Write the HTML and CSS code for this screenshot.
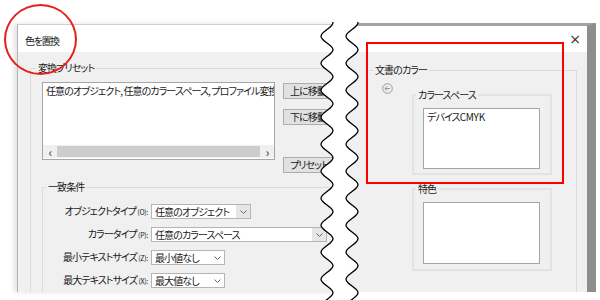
FILE: index.html
```html
<!DOCTYPE html>
<html lang="ja">
<head>
    <meta charset="UTF-8">
    <meta name="viewport" content="width=device-width, initial-scale=1.0">
    <title>色を置換</title>
    <link rel="stylesheet" href="styles.css">
</head>
<body>
    <div class="stage">
        <!-- 左側: 色を置換ダイアログ -->
        <div class="dlg dlg-left">
            <div class="titlebar">色を置換</div>
            <div class="dlg-body">
                <div class="grp grp-preset">
                    <div class="grp-title">変換プリセット</div>
                    <div class="preset-row">
                        <div class="listbox preset-list">
                            <div class="list-text">任意のオブジェクト, 任意のカラースペース, プロファイル変換</div>
                            <div class="hscroll">
                                <span class="sc-arrow">&lsaquo;</span>
                                <span class="sc-thumb"></span>
                                <span class="sc-arrow">&rsaquo;</span>
                            </div>
                        </div>
                        <div class="btn-col">
                            <button class="btn btn-up">上に移動</button>
                            <button class="btn btn-down">下に移動</button>
                            <button class="btn btn-save">プリセットを保存</button>
                        </div>
                    </div>

                    <div class="grp grp-match">
                        <div class="grp-title">一致条件</div>
                        <div class="cond-grid">
                            <label>オブジェクトタイプ <small>(O):</small></label>
                            <div class="combo combo-obj">
                                <span class="combo-text">任意のオブジェクト</span>
                                <span class="combo-btn"><svg width="7" height="4" viewBox="0 0 7 4"><polyline points="0.5,0.5 3.5,3.5 6.5,0.5" fill="none" stroke="#666" stroke-width="1"/></svg></span>
                            </div>

                            <label>カラータイプ <small>(P):</small></label>
                            <div class="combo combo-color">
                                <span class="combo-text">任意のカラースペース</span>
                                <span class="combo-btn"><svg width="7" height="4" viewBox="0 0 7 4"><polyline points="0.5,0.5 3.5,3.5 6.5,0.5" fill="none" stroke="#666" stroke-width="1"/></svg></span>
                            </div>

                            <label>最小テキストサイズ <small>(Z):</small></label>
                            <div class="combo combo-size">
                                <span class="combo-text">最小値なし</span>
                                <span class="combo-arrow"><svg width="7" height="4" viewBox="0 0 7 4"><polyline points="0.5,0.5 3.5,3.5 6.5,0.5" fill="none" stroke="#666" stroke-width="1"/></svg></span>
                            </div>

                            <label>最大テキストサイズ <small>(X):</small></label>
                            <div class="combo combo-size">
                                <span class="combo-text">最大値なし</span>
                                <span class="combo-arrow"><svg width="7" height="4" viewBox="0 0 7 4"><polyline points="0.5,0.5 3.5,3.5 6.5,0.5" fill="none" stroke="#666" stroke-width="1"/></svg></span>
                            </div>
                        </div>
                    </div>
                </div>
            </div>
        </div>

        <!-- 右側: 文書のカラー -->
        <div class="dlg dlg-right">
            <div class="titlebar titlebar-right"><span class="close">&times;</span></div>
            <div class="dlg-body">
                <div class="grp grp-doc">
                    <div class="grp-title">文書のカラー</div>
                    <div class="doc-row">
                        <svg class="back-icon" width="11" height="11" viewBox="0 0 11 11">
                            <circle cx="5.5" cy="5.5" r="4.8" fill="none" stroke="#9a9a9a" stroke-width="1"/>
                            <polyline points="5.2,3.2 3,5.5 5.2,7.8" fill="none" stroke="#9a9a9a" stroke-width="1"/>
                            <line x1="3" y1="5.5" x2="8" y2="5.5" stroke="#9a9a9a" stroke-width="1"/>
                        </svg>
                        <div class="sub-col">
                            <div class="grp grp-sub grp-space">
                                <div class="grp-title">カラースペース</div>
                                <div class="listbox sub-list">
                                    <div class="list-text">デバイス<span class="latin">CMYK</span></div>
                                </div>
                            </div>
                            <div class="grp grp-sub grp-spot">
                                <div class="grp-title">特色</div>
                                <div class="listbox sub-list sub-list-spot"></div>
                            </div>
                        </div>
                    </div>
                </div>
            </div>
        </div>

        <!-- 破り目 -->
        <svg class="tear" width="600" height="278" viewBox="0 22 600 278">
            <path fill="#fff" d="M327 16c8 5.73 8 7.77 0 13.5c-8 5.73-8 7.77 0 13.5c8 5.73 8 7.77 0 13.5c-8 5.73-8 7.77 0 13.5c8 5.73 8 7.77 0 13.5c-8 5.73-8 7.77 0 13.5c8 5.73 8 7.77 0 13.5c-8 5.73-8 7.77 0 13.5c8 5.73 8 7.77 0 13.5c-8 5.73-8 7.77 0 13.5c8 5.73 8 7.77 0 13.5c-8 5.73-8 7.77 0 13.5c8 5.73 8 7.77 0 13.5c-8 5.73-8 7.77 0 13.5c8 5.73 8 7.77 0 13.5c-8 5.73-8 7.77 0 13.5c8 5.73 8 7.77 0 13.5c-8 5.73-8 7.77 0 13.5c8 5.73 8 7.77 0 13.5c-8 5.73-8 7.77 0 13.5c8 5.73 8 7.77 0 13.5c-8 5.73-8 7.77 0 13.5L352 313c-8-5.73-8-7.77 0-13.5c8-5.73 8-7.77 0-13.5c-8-5.73-8-7.77 0-13.5c8-5.73 8-7.77 0-13.5c-8-5.73-8-7.77 0-13.5c8-5.73 8-7.77 0-13.5c-8-5.73-8-7.77 0-13.5c8-5.73 8-7.77 0-13.5c-8-5.73-8-7.77 0-13.5c8-5.73 8-7.77 0-13.5c-8-5.73-8-7.77 0-13.5c8-5.73 8-7.77 0-13.5c-8-5.73-8-7.77 0-13.5c8-5.73 8-7.77 0-13.5c-8-5.73-8-7.77 0-13.5c8-5.73 8-7.77 0-13.5c-8-5.73-8-7.77 0-13.5c8-5.73 8-7.77 0-13.5c-8-5.73-8-7.77 0-13.5c8-5.73 8-7.77 0-13.5c-8-5.73-8-7.77 0-13.5c8-5.73 8-7.77 0-13.5Z"/>
            <path class="tear-line" d="M327 16c8 5.73 8 7.77 0 13.5c-8 5.73-8 7.77 0 13.5c8 5.73 8 7.77 0 13.5c-8 5.73-8 7.77 0 13.5c8 5.73 8 7.77 0 13.5c-8 5.73-8 7.77 0 13.5c8 5.73 8 7.77 0 13.5c-8 5.73-8 7.77 0 13.5c8 5.73 8 7.77 0 13.5c-8 5.73-8 7.77 0 13.5c8 5.73 8 7.77 0 13.5c-8 5.73-8 7.77 0 13.5c8 5.73 8 7.77 0 13.5c-8 5.73-8 7.77 0 13.5c8 5.73 8 7.77 0 13.5c-8 5.73-8 7.77 0 13.5c8 5.73 8 7.77 0 13.5c-8 5.73-8 7.77 0 13.5c8 5.73 8 7.77 0 13.5c-8 5.73-8 7.77 0 13.5c8 5.73 8 7.77 0 13.5c-8 5.73-8 7.77 0 13.5"/>
            <path class="tear-line" d="M352 16c8 5.73 8 7.77 0 13.5c-8 5.73-8 7.77 0 13.5c8 5.73 8 7.77 0 13.5c-8 5.73-8 7.77 0 13.5c8 5.73 8 7.77 0 13.5c-8 5.73-8 7.77 0 13.5c8 5.73 8 7.77 0 13.5c-8 5.73-8 7.77 0 13.5c8 5.73 8 7.77 0 13.5c-8 5.73-8 7.77 0 13.5c8 5.73 8 7.77 0 13.5c-8 5.73-8 7.77 0 13.5c8 5.73 8 7.77 0 13.5c-8 5.73-8 7.77 0 13.5c8 5.73 8 7.77 0 13.5c-8 5.73-8 7.77 0 13.5c8 5.73 8 7.77 0 13.5c-8 5.73-8 7.77 0 13.5c8 5.73 8 7.77 0 13.5c-8 5.73-8 7.77 0 13.5c8 5.73 8 7.77 0 13.5c-8 5.73-8 7.77 0 13.5"/>
        </svg>

        <!-- 注釈 -->
        <div class="mark-circle"></div>
        <div class="mark-rect"></div>
    </div>
</body>
</html>
```

FILE: styles.css
```css
body {
    margin: 0;
    background: #fff;
    font-family: "Noto Sans CJK JP", "Noto Sans", sans-serif;
    font-size: 10px;
    font-feature-settings: "palt";
    letter-spacing: -0.9px;
    color: #1a1a1a;
}

.stage {
    position: relative;
    width: 600px;
    height: 300px;
    overflow: hidden;
    display: flex;
    align-items: flex-start;
    padding-top: 23px;
    box-sizing: border-box;
}

.dlg {
    display: flex;
    flex-direction: column;
    box-sizing: border-box;
    overflow: hidden;
}

.dlg-left {
    margin-top: 1px;
    margin-left: 17px;
    width: 323px;
    height: 268px;
    border-top: 1px solid #cfcfcf;
    border-left: 1px solid #b4b4b4;
    box-shadow: -3px 0 5px rgba(0, 0, 0, 0.12);
}

.titlebar {
    height: 27px;
    flex: none;
    background: #fff;
    padding: 10px 0 0 7px;
    box-sizing: border-box;
    line-height: 12px;
    letter-spacing: -1.4px;
}

.dlg-body {
    flex: 1;
    background: #f0f0f0;
    min-height: 0;
}

.dlg-left .dlg-body {
    padding: 16px 0 0 12px;
}

/* グループボックス */
.grp {
    border: 1px solid #dcdcdc;
}

.grp-title {
    width: max-content;
    background: #f0f0f0;
    padding: 0 2px;
    line-height: 12px;
    margin: -7px 0 0 5px;
}

.grp-preset {
    width: 420px;
    height: 300px;
    padding-left: 11px;
    box-sizing: border-box;
}

.grp-preset > .grp-title {
    margin-left: -6px;
}

.preset-row {
    display: flex;
    align-items: flex-start;
    height: 78px;
    margin-top: 8px;
}

.listbox {
    background: #fff;
    border: 1px solid #a6a6a6;
    box-sizing: border-box;
}

.preset-list {
    width: 233px;
    height: 78px;
    display: flex;
    flex-direction: column;
    overflow: hidden;
}

.list-text {
    white-space: nowrap;
    padding: 1px 0 0 3px;
    line-height: 13px;
}

.latin {
    letter-spacing: -0.3px;
}

.preset-list .list-text {
    flex: 1;
}

.hscroll {
    height: 13px;
    margin-bottom: 1px;
    display: flex;
    align-items: center;
    background: #f0f0f0;
}

.sc-arrow {
    width: 14px;
    text-align: center;
    font-size: 12px;
    line-height: 12px;
    color: #606060;
    font-weight: bold;
}

.sc-thumb {
    flex: 1;
    height: 11px;
    background: #cdcdcd;
}

.btn-col {
    display: flex;
    flex-direction: column;
    margin-left: 8px;
    padding-top: 1px;
}

.btn {
    height: 16px;
    width: 80px;
    padding: 0 0 0 6px;
    text-align: left;
    font: inherit;
    line-height: 14px;
    letter-spacing: inherit;
    color: #1a1a1a;
    background: #e1e1e1;
    border: 1px solid #adadad;
    border-radius: 0;
    white-space: nowrap;
}

.btn-down {
    margin-top: 10px;
}

.btn-save {
    margin-top: 32px;
}

.grp-match {
    margin-top: 27px;
    width: 360px;
    height: 200px;
    box-sizing: border-box;
}

.grp-match .grp-title {
    margin-left: 3px;
}

.cond-grid {
    display: grid;
    grid-template-columns: 105px auto;
    column-gap: 3px;
    row-gap: 8px;
    margin-top: 11px;
    align-items: center;
    justify-items: start;
}

.cond-grid label {
    justify-self: end;
    white-space: nowrap;
    line-height: 14px;
}

.cond-grid small {
    font-size: 7px;
    letter-spacing: -0.3px;
}

/* コンボボックス */
.combo {
    height: 15px;
    display: flex;
    background: #fff;
    border: 1px solid #b5b5b5;
    box-sizing: border-box;
}

.combo-text {
    flex: 1;
    padding-left: 3px;
    line-height: 13px;
    white-space: nowrap;
    overflow: hidden;
}

.combo-btn {
    width: 14px;
    background: #e6e6e6;
    display: flex;
    align-items: center;
    justify-content: center;
}

.combo-arrow {
    width: 14px;
    display: flex;
    align-items: center;
    justify-content: center;
}

.combo-obj {
    width: 100px;
}

.combo-color {
    width: 176px;
}

.combo-size {
    width: 74px;
}

/* 右ダイアログ */
.dlg-right {
    width: 256px;
    height: 269px;
    border-top: 3px solid #a2a2a2;
    border-right: 9px solid #8d8d8d;
}

.titlebar-right {
    height: 26px;
    padding: 6px 6px 0 0;
    display: flex;
    justify-content: flex-end;
}

.close {
    font-family: "DejaVu Sans", sans-serif;
    font-size: 14px;
    line-height: 14px;
    letter-spacing: 0;
    color: #333;
}

.dlg-right .dlg-body {
    padding: 18px 10px 0 26px;
}

.grp-doc {
    height: 240px;
    border-bottom: none;
    border-left-color: #f0f0f0;
}

.grp-doc .grp-title {
    margin-left: 6px;
}

.doc-row {
    display: flex;
    align-items: flex-start;
}

.back-icon {
    margin: 7px 0 0 15px;
    flex: none;
}

.sub-col {
    margin: 18px 0 0 19px;
    width: 140px;
}

.grp-sub {
    border: 2px solid #e3e3e3;
    padding-left: 9px;
}

.grp-sub .grp-title {
    margin-left: -7px;
}

.grp-space {
    padding-bottom: 4px;
}

.grp-spot {
    margin-top: 13px;
    padding-bottom: 5px;
}

.sub-list {
    width: 117px;
    height: 61px;
    margin-top: 7px;
}

.sub-list-spot {
    height: 62px;
}

/* 破り目と注釈 */
.tear {
    position: absolute;
    left: 0;
    top: 22px;
}

.tear-line {
    fill: none;
    stroke: #000;
    stroke-width: 1.3;
}

.mark-circle {
    position: absolute;
    left: 4px;
    top: 4px;
    width: 73px;
    height: 71px;
    border: 2px solid #e8201c;
    border-radius: 50%;
    box-sizing: border-box;
}

.mark-rect {
    position: absolute;
    left: 366px;
    top: 42px;
    width: 198px;
    height: 142px;
    border: 2px solid #f00;
    box-sizing: border-box;
}
```
